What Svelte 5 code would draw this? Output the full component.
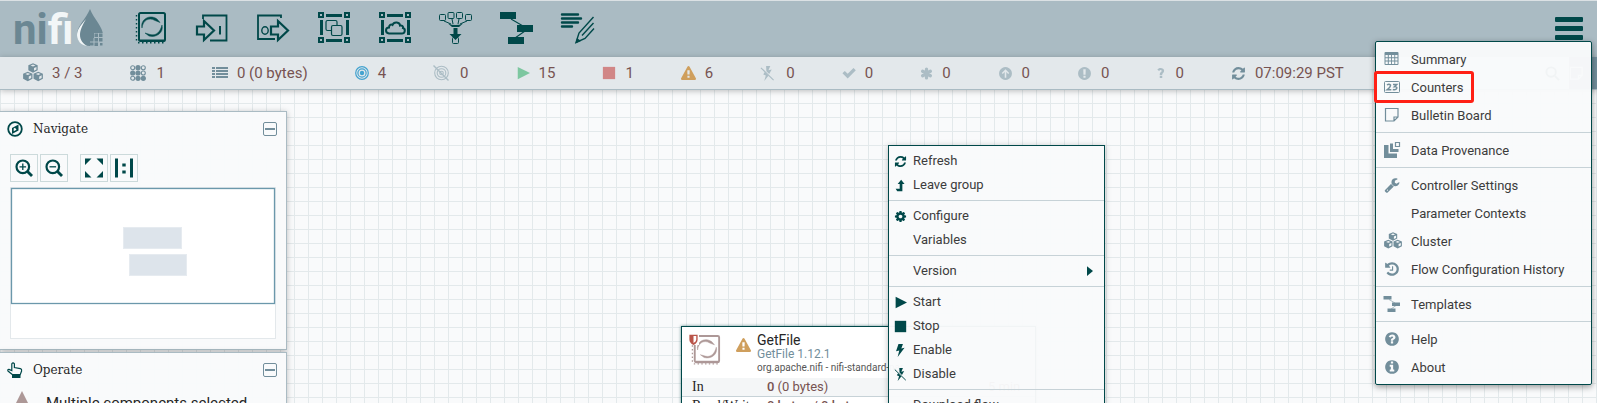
<script lang="ts">
	interface MenuItem {
		label: string;
		icon?: string;
		submenu?: boolean;
		marked?: boolean;
	}

	interface Icon {
		box: number;
		body: string;
	}

	const CIRCLE =
		'M1664 896q0 209-103 385.5t-279.5 279.5-385.5 103-385.5-103-279.5-279.5-103-385.5 103-385.5 279.5-279.5 385.5-103 385.5 103 279.5 279.5 103 385.5z';

	const CORNERS =
		'<path fill="none" stroke="currentColor" stroke-width="2" d="M1 1h4v4h-4zM27 1h4v4h-4zM1 26h4v4h-4zM27 26h4v4h-4z"/><path d="M8 2h16v3H8zM8 27h16v3H8zM2 8h3v15H2zM28 8h3v15h-3z"/>';

	const CUBE =
		'<path d="M9 .2 13.200 2v4.600L9 8.800 4.800 6.600V2zM6.800 2.300 9 3.200l2.200-.9L9 1.400zM9.900 4.500v2.500l2.200-1.100V3.500z"/>';

	const icons: Record<string, Icon> = {
		processor: {
			box: 32,
			body: '<rect x="4" y="1" width="26" height="28" rx="1.500" fill="none" stroke="currentColor" stroke-width="2"/><path d="M5 27.500h25v2H5z"/><path d="M1.500 3v28M3 30.800h28" fill="none" stroke="currentColor" stroke-width="1.400" stroke-dasharray="1.500 2.500"/><path d="M7 16C5 8 14 1.500 22 7l3 3.500-5-2C14 5 8 8 7 16zM27 13c2 8-6 13-13 11l-4-3 5 1.500c6 1.500 10-2 12-9.500z" stroke="currentColor" stroke-width=".5"/>'
		},
		input: {
			box: 32,
			body: '<path fill="none" stroke="currentColor" stroke-width="1.800" d="M7 7V3.500h23.500v25H14"/><path fill="none" stroke="currentColor" stroke-width="2.200" d="M1 14.500h7V9l10 9.500L8 28v-5.500H1z"/><path d="M23 14h2v8.500h-2z"/>'
		},
		output: {
			box: 32,
			body: '<path fill="none" stroke="currentColor" stroke-width="1.800" d="M24 6V3.500H1v23.500h17"/><path fill="none" stroke="currentColor" stroke-width="2.200" d="M14 14.500h7V9l10 9.500L21 28v-5.500h-7z"/><ellipse cx="8" cy="18.500" rx="3.200" ry="3.700" fill="none" stroke="currentColor" stroke-width="1.400"/>'
		},
		group: {
			box: 32,
			body:
				CORNERS +
				'<g fill="none" stroke="currentColor" stroke-width="1.200"><path d="M13 18.500h-3.500q-1.500 0-1.500-1.500v-7q0-1.500 1.500-1.500h8q1.500 0 1.500 1.500v3"/><rect x="13.500" y="13.500" width="10.500" height="10" rx="1.500"/></g>'
		},
		remote: {
			box: 32,
			body:
				CORNERS +
				'<path fill="none" stroke="currentColor" stroke-width="2" d="M10 21.500c-4-.5-4-6 0-6 0-2.500 2-3.500 3.500-2.500 1.500-4 7.500-3 7.500.5 2-.5 3.500 1 3 2.500 3 1 2 5.500-1 5.500z"/>'
		},
		funnel: {
			box: 32,
			body: '<g fill="none" stroke="currentColor" stroke-width="1"><rect x="-.5" y="2.500" width="6" height="6" rx="1"/><rect x="8" y=".5" width="6" height="6" rx="1"/><rect x="16.500" y=".5" width="6" height="6" rx="1"/><rect x="25.500" y="2.500" width="6" height="6" rx="1"/><rect x="12.500" y="25.500" width="6" height="6" rx="1"/><path d="M4 9l7 3M27 9l-7 3M12 7l1 5M19 7l-1 5"/></g><path d="M8 11.500q7.500 3 15 0L19 15h-7zM13.500 16h4v6h4l-6 6-6-6h4z"/>'
		},
		template: {
			box: 32,
			body: '<path d="M-1 0h16v7H-1zM16 13h16v7H16zM7 25h16v7H7z"/><path fill="none" stroke="currentColor" stroke-width="1.100" d="M10 7l12 7M24 19l-10 7"/>'
		},
		label: {
			box: 32,
			body: '<path fill="none" stroke="currentColor" stroke-width="2.400" stroke-linecap="round" d="M0 2.500h16M0 6.500h19M0 10.500h16M0 14.500h10"/><path fill="none" stroke="currentColor" stroke-width="1.400" d="M31.500 5 17 21l-3 9.500 9-4 9-10M31.500 11 20 23.500"/><path d="m15 26-1.500 5.500L19 29z"/>'
		},
		refresh: {
			box: 1792,
			body: '<path d="M1639 1056q0 5-1 7-64 268-268 434.500t-478 166.500q-146 0-282.500-55t-243.500-157l-129 129q-19 19-45 19t-45-19-19-45v-448q0-26 19-45t45-19h448q26 0 45 19t19 45-19 45l-137 137q71 66 161 102t187 36q134 0 250-65t186-179q11-17 53-117 8-23 30-23h192q13 0 22.500 9.500t9.500 22.500zm25-800v448q0 26-19 45t-45 19h-448q-26 0-45-19t-19-45 19-45l138-138q-148-137-349-137-134 0-250 65t-186 179q-11 17-53 117-8 23-30 23h-199q-13 0-22.500-9.500t-9.500-22.500v-7q65-268 270-434.500t480-166.500q146 0 284 55.500t245 156.500l130-129q19-19 45-19t45 19 19 45z"/>'
		},
		warning: {
			box: 1792,
			body: '<path d="M1024 1375v-190q0-14-9.500-23.500t-22.500-9.500h-192q-13 0-22.500 9.500t-9.500 23.500v190q0 14 9.500 23.500t22.500 9.500h192q13 0 22.500-9.500t9.500-23.500zm-2-374l18-459q0-12-10-19-13-11-24-11h-220q-11 0-24 11-10 7-10 21l17 457q0 10 10 16.500t24 6.500h185q14 0 23.500-6.500t10.500-16.500zm-14-934l768 1408q35 63-2 126-17 29-46.500 46t-63.500 17h-1536q-34 0-63.500-17t-46.500-46q-37-63-2-126l768-1408q17-31 47-49t65-18 65 18 47 49z"/>'
		},
		cog: {
			box: 1792,
			body: '<path d="M1152 896q0-106-75-181t-181-75-181 75-75 181 75 181 181 75 181-75 75-181zm512-109v222q0 12-8 23t-20 13l-185 28q-19 54-39 91 35 50 107 138 10 12 10 25t-9 23q-27 37-99 108t-94 71q-12 0-26-9l-138-108q-44 23-91 38-16 136-29 186-7 28-36 28h-222q-14 0-24.500-8.500t-11.500-21.500l-28-184q-49-16-90-37l-141 107q-10 9-25 9-14 0-25-11-126-114-165-168-7-10-7-23 0-12 8-23 15-21 51-66.500t54-70.500q-27-50-41-99l-183-27q-13-2-21-12.500t-8-23.500v-222q0-12 8-23t19-13l186-28q14-46 39-92-40-57-107-138-10-12-10-24 0-10 9-23 26-36 98.500-107.500t94.500-71.500q13 0 26 10l138 107q44-23 91-38 16-136 29-186 7-28 36-28h222q14 0 24.500 8.500t11.500 21.500l28 184q49 16 90 37l142-107q9-9 24-9 13 0 25 10 129 119 165 170 7 8 7 22 0 12-8 23-15 21-51 66.500t-54 70.500q26 50 41 98l183 28q13 2 21 12.500t8 23.500z"/>'
		},
		wrench: {
			box: 1792,
			body: '<path d="M448 1472q0-26-19-45t-45-19-45 19-19 45 19 45 45 19 45-19 19-45zm644-420l-682 682q-37 37-90 37-52 0-91-37l-106-108q-38-36-38-90 0-53 38-91l681-681q39 98 114.500 173.500t173.500 114.500zm634-435q0 39-23 106-47 134-164.500 217.500t-258.500 83.500q-185 0-316.500-131.500t-131.500-316.500 131.500-316.500 316.500-131.500q58 0 121.500 16.500t107.500 46.500q16 11 16 28t-16 28l-293 169v224l193 107q5-3 79-48.500t135.500-81 70.500-35.500q15 0 23.500 10t8.500 25z"/>'
		},
		history: {
			box: 1792,
			body: '<path d="M1664 896q0 156-61 298t-164 245-245 164-298 61q-172 0-327-72.500t-264-204.500q-7-10-6.500-22.500t8.500-20.500l137-138q10-9 25-9 16 2 23 12 73 95 179 147t225 52q104 0 198.500-40.500t163.500-109.500 109.500-163.500 40.500-198.500-40.500-198.500-109.500-163.500-163.500-109.500-198.500-40.500q-98 0-188 35.500t-160 101.500l137 138q31 30 14 69-17 40-59 40h-448q-26 0-45-19t-19-45v-448q0-42 40-59 39-17 69 14l130 129q107-101 244.500-156.500t284.500-55.500q156 0 298 61t245 164 164 245 61 298zm-640-288v448q0 14-9 23t-23 9h-320q-14 0-23-9t-9-23v-64q0-14 9-23t23-9h224v-352q0-14 9-23t23-9h64q14 0 23 9t9 23z"/>'
		},
		help: {
			box: 1792,
			body: `<path d="M1024 1376v-192q0-14-9-23t-23-9h-192q-14 0-23 9t-9 23v192q0 14 9 23t23 9h192q14 0 23-9t9-23zm256-672q0-88-55.500-163t-138.500-116-170-41q-243 0-371 213-15 24 8 42l132 100q7 6 19 6 16 0 25-12 53-68 86-92 34-24 86-24 48 0 85.500 26t37.500 59q0 38-20 61t-68 45q-63 28-115.500 86.500t-52.500 125.500v36q0 14 9 23t23 9h192q14 0 23-9t9-23q0-19 21.500-49.500t54.500-49.500q32-18 49-28.500t46-35 44.500-48 28-60.500 12.500-81z${CIRCLE}"/>`
		},
		about: {
			box: 1792,
			body: `<path d="M1152 1376v-160q0-14-9-23t-23-9h-96v-512q0-14-9-23t-23-9h-320q-14 0-23 9t-9 23v160q0 14 9 23t23 9h96v320h-96q-14 0-23 9t-9 23v160q0 14 9 23t23 9h448q14 0 23-9t9-23zm-128-896v-160q0-14-9-23t-23-9h-192q-14 0-23 9t-9 23v160q0 14 9 23t23 9h192q14 0 23-9t9-23z${CIRCLE}"/>`
		},
		syncFailure: {
			box: 1792,
			body: `<path d="M1024 1375v-190q0-14-9-23.500t-22-9.500h-192q-13 0-23 10t-10 23v190q0 13 10 23t23 10h192q13 0 22-9.500t9-23.500zm-2-344l18-621q0-12-10-18-10-8-24-8h-220q-14 0-24 8-10 6-10 18l17 621q0 10 10 17.500t24 7.500h185q14 0 23.500-7.500t10.500-17.500z${CIRCLE}"/>`
		},
		stale: {
			box: 1792,
			body: `<path d="M896 380 1340 824 1220 944 990 720V1400H802V720L572 944 452 824z${CIRCLE}"/>`
		},
		unknown: {
			box: 16,
			body: '<path d="M6 12.500h4V16H6zM6 11V9.500C6 7 9 6.800 9 4.800 9 2.700 6 2.800 5 4.800L2.200 2.700C4.500-1.500 13-.5 13 4.500c0 3.500-3.200 3.500-3.200 6.500z"/>'
		},
		check: { box: 16, body: '<path d="m.5 8.300 2.700-2.700 3.300 3.200 6.600-6.600 2.700 2.700-9.300 9.300z"/>' },
		asterisk: {
			box: 16,
			body: '<g stroke="currentColor" stroke-width="4" stroke-linecap="round"><path d="M8 2.500v11M3.200 5.200l9.600 5.600M12.800 5.200l-9.600 5.600"/></g>'
		},
		play: { box: 16, body: '<path d="M2 1 16 8 2 15z"/>' },
		stop: { box: 16, body: '<path d="M1 1h14v14H1z"/>' },
		caret: { box: 16, body: '<path d="M4 1.500 12 8l-8 6.500z"/>' },
		bolt: { box: 16, body: '<path d="M5.500 0h5.500L9 5.500l4-.8L4.500 16l2-8L2.500 9z"/>' },
		disabled: {
			box: 16,
			body: '<path d="M6.500 0h4.500L9 4.500l3.500-.7-2.700 4.700-3-3zM5 6.500l4 4-4.500 5.500L6.200 10 3.500 9z"/><path d="M1 2l13.500 13" fill="none" stroke="currentColor" stroke-width="1.200"/>'
		},
		leave: { box: 16, body: '<path d="M2 12h5V6H4.500L8.800 1 13 6h-2.700v9H4z"/>' },
		cubes: {
			box: 18,
			body: `${CUBE}<g transform="translate(-4.700 7.600)">${CUBE}</g><g transform="translate(4.700 7.600)">${CUBE}</g>`
		},
		threads: {
			box: 16,
			body: '<g fill="none" stroke="currentColor" stroke-width="1.100"><circle cx="2.700" cy="2.700" r="2"/><circle cx="13.300" cy="2.700" r="2"/><circle cx="13.300" cy="8" r="2"/><circle cx="2.700" cy="13.300" r="2"/></g><circle cx="8" cy="2.700" r="2.600"/><circle cx="2.700" cy="8" r="2.600"/><circle cx="8" cy="8" r="2.600"/><circle cx="8" cy="13.300" r="2.600"/><circle cx="13.300" cy="13.300" r="2.600"/>'
		},
		list: {
			box: 16,
			body: '<path d="M0 2h3v2H0zM4 2h12v2H4zM0 5h3v2H0zM4 5h12v2H4zM0 8h3v2H0zM4 8h12v2H4zM0 11h3v2H0zM4 11h12v2H4z"/>'
		},
		transmitting: {
			box: 16,
			body: '<g fill="none" stroke="currentColor" stroke-width="1.400"><circle cx="8" cy="8" r="7.200"/><circle cx="8" cy="8" r="4.700"/></g><circle cx="8" cy="8" r="2.500"/>'
		},
		notTransmitting: {
			box: 16,
			body: '<g fill="none" stroke="currentColor" stroke-width="1.100"><circle cx="8.500" cy="8" r="6.800"/><circle cx="8.500" cy="8" r="4.300"/><circle cx="8.500" cy="8" r="1.800"/><path d="M.5.5l15 15" stroke-width="1.400"/></g>'
		},
		table: {
			box: 16,
			body: '<path d="M1.500 1h12q1 0 1 1v11q0 1-1 1h-12q-1 0-1-1V2q0-1 1-1zM1.500 4v2.300h2.300V4zM4.800 4v2.300h2.300V4zM8 4v2.300h2.300V4zM11.200 4v2.300h2.300V4zM1.500 7.300v2.300h2.300V7.300zM4.800 7.300v2.300h2.300V7.300zM8 7.300v2.300h2.300V7.300zM11.200 7.300v2.300h2.300V7.300zM1.500 10.600v2.300h2.300v-2.300zM4.800 10.600v2.300h2.300v-2.300zM8 10.600v2.300h2.300v-2.300zM11.200 10.600v2.300h2.300v-2.300z"/>'
		},
		counter: {
			box: 16,
			body: '<rect x=".5" y="2.500" width="15" height="11" rx="1" fill="none" stroke="currentColor"/><path fill="none" stroke="currentColor" stroke-width="1.500" d="M3 6q2-1.600 3.500 0 .4 1.600-3.400 4.800H7.300M9 5.500h3.700L10.500 7.700q2.700-.2 2.300 1.600-1 2.200-4 1.200"/>'
		},
		bulletin: {
			box: 16,
			body: '<path fill="none" stroke="currentColor" stroke-width="1.200" d="M1.500 1.500h12.500v8.500l-4 4H1.500zM14 10h-4v4"/>'
		},
		provenance: {
			box: 16,
			body: '<path d="M0 3h4.500v8.500H13V16H0zM6 1.500h3V7h5.500v3H6z"/><path d="M11.500.5h4v4h-4z" fill="none" stroke="currentColor" stroke-width="1.200"/>'
		},
		compass: {
			box: 16,
			body: '<circle cx="8" cy="8" r="6.800" fill="none" stroke="currentColor" stroke-width="1.800"/><path d="M11.500 3.500v6l-6.500 3.500V7zM8 6.700 6.700 7.500v2.800L9.500 8.700z"/>'
		},
		hand: {
			box: 16,
			body: '<path fill="none" stroke="currentColor" stroke-width="1.200" d="M5.300 12.500 1 9q-.8-1.700 1-1.600l2.800 1.200V1.800q1.200-2 2.600 0V5.500l6 1.200q1.600.4 1.200 2.300l-1.400 3.600z"/><path d="M5 13h8.500v3H5z"/>'
		},
		zoomIn: {
			box: 18,
			body: '<g fill="none" stroke="currentColor"><circle cx="7.800" cy="7.800" r="6.300" stroke-width="2.200"/><path stroke-width="2.800" d="m12.500 12.500 4.500 4.500"/><path stroke-width="1.300" d="M4.500 7.800h6.600M7.800 4.500v6.600"/></g>'
		},
		zoomOut: {
			box: 18,
			body: '<g fill="none" stroke="currentColor"><circle cx="7.800" cy="7.800" r="6.300" stroke-width="2.200"/><path stroke-width="2.800" d="m12.500 12.500 4.500 4.500"/><path stroke-width="1.300" d="M4.500 7.800h6.600"/></g>'
		},
		fit: {
			box: 18,
			body: '<path d="M0-.5h6.500L0 6zM18-.5v6.500L11.500-.5zM0 18.500V12l6.500 6.500zM18 18.500h-6.500L18 12z"/>'
		},
		actual: { box: 18, body: '<path d="M0-.5h3v19H0zM15-.5h3v19h-3zM7.300 4.500h3.400v3H7.300zM7.300 11.500h3.400v3H7.300z"/>' },
		search: {
			box: 16,
			body: '<g fill="none" stroke="currentColor" stroke-width="2"><circle cx="6.500" cy="6.500" r="5"/><path d="m10.500 10.500 4.500 4.500"/></g>'
		},
		shield: { box: 16, body: '<path d="M2 1h12v7q0 5-6 8-6-3-6-8zM8 3v10q4-2 4-5V3z"/>' },
		selection: { box: 32, body: '<path d="M16 0 32 32H0z"/>' }
	};

	const tools = [
		['processor', 'Processor'],
		['input', 'Input Port'],
		['output', 'Output Port'],
		['group', 'Process Group'],
		['remote', 'Remote Process Group'],
		['funnel', 'Funnel'],
		['template', 'Template'],
		['label', 'Label']
	];

	const statuses = [
		{ icon: 'cubes', value: '3 / 3', size: 20, tone: 'slate' },
		{ icon: 'threads', value: '1', size: 16, tone: 'slate', wide: true },
		{ icon: 'list', value: '0 (0 bytes)', size: 16, tone: 'slate' },
		{ icon: 'transmitting', value: '4', size: 14, tone: 'blue' },
		{ icon: 'notTransmitting', value: '0', size: 16, tone: 'pale', wide: true },
		{ icon: 'play', value: '15', size: 14, tone: 'green' },
		{ icon: 'stop', value: '1', size: 14, tone: 'red' },
		{ icon: 'warning', value: '6', size: 15, tone: 'amber' },
		{ icon: 'disabled', value: '0', size: 15, tone: 'pale', wide: true },
		{ icon: 'check', value: '0', size: 14, tone: 'pale' },
		{ icon: 'asterisk', value: '0', size: 13, tone: 'pale' },
		{ icon: 'stale', value: '0', size: 15, tone: 'pale' },
		{ icon: 'syncFailure', value: '0', size: 15, tone: 'pale' },
		{ icon: 'unknown', value: '0', size: 10, tone: 'pale' },
		{ icon: 'refresh', value: '07:09:29 PST', size: 15, tone: 'slate' }
	];

	const globalMenu: MenuItem[][] = [
		[
			{ label: 'Summary', icon: 'table' },
			{ label: 'Counters', icon: 'counter', marked: true },
			{ label: 'Bulletin Board', icon: 'bulletin' }
		],
		[{ label: 'Data Provenance', icon: 'provenance' }],
		[
			{ label: 'Controller Settings', icon: 'wrench' },
			{ label: 'Parameter Contexts' },
			{ label: 'Cluster', icon: 'cubes' },
			{ label: 'Flow Configuration History', icon: 'history' }
		],
		[{ label: 'Templates', icon: 'template' }],
		[
			{ label: 'Help', icon: 'help' },
			{ label: 'About', icon: 'about' }
		]
	];

	const contextMenu: MenuItem[][] = [
		[
			{ label: 'Refresh', icon: 'refresh' },
			{ label: 'Leave group', icon: 'leave' }
		],
		[{ label: 'Configure', icon: 'cog' }, { label: 'Variables' }],
		[{ label: 'Version', submenu: true }],
		[
			{ label: 'Start', icon: 'play' },
			{ label: 'Stop', icon: 'stop' },
			{ label: 'Enable', icon: 'bolt' },
			{ label: 'Disable', icon: 'disabled' }
		],
		[{ label: 'Download flow' }]
	];

	let navigateOpen = $state(true);
	let operateOpen = $state(true);
	let menuOpen = $state(true);
</script>

{#snippet icon(name: string, size: number)}
	<svg
		class="icon"
		width={size}
		height={size}
		viewBox="0 0 {icons[name].box} {icons[name].box}"
		fill="currentColor"
		fill-rule="evenodd"
		aria-hidden="true">{@html icons[name].body}</svg
	>
{/snippet}

{#snippet menu(groups: MenuItem[][], iconSize: number)}
	{#each groups as group}
		<div class="menu-group">
			{#each group as item}
				<button class="menu-item" class:marked={item.marked}>
					<span class="menu-icon">
						{#if item.icon}{@render icon(item.icon, item.icon === 'cubes' ? 18 : iconSize)}{/if}
					</span>
					<span class="menu-label">{item.label}</span>
					{#if item.submenu}{@render icon('caret', 12)}{/if}
				</button>
			{/each}
		</div>
	{/each}
{/snippet}

<div class="app">
	<header class="toolbar">
		<div class="logo">
			<span class="logo-text">ni<span class="logo-light">fi</span></span>
			<svg class="drop" width="28" height="38" viewBox="0 0 28 38" aria-hidden="true">
				<path d="M14 0C10 10 1 17 1 25.500 1 33 7 37 14 37c3 0 5-.5 7-2l6-9C27 18 18 10 14 0z" fill="#6b8793" />
				<path d="M10 10C4 17 1 21 1 26c0 6 4 10 10 11-4-2.500-7-6-7-11 0-5 3-11 6-16z" fill="#f2f6f7" />
				<path d="M18 24h9v12h-9zM14 29h5v8h-5z" fill="#aabbc3" />
				<path
					d="M18.500 24.500h3.500v3.500h-3.500zM23 24.500h3.500v3.500H23zM18.500 29h3.500v3.500h-3.500zM23 29h3.500v3.500H23zM14 29h3.500v3.500H14zM18.500 33.500h3.500v3.500h-3.500zM14 33.500h3.500v3H14zM24 34h2.500v2.500H24z"
					fill="#6b8793"
				/>
			</svg>
		</div>
		<div class="tools">
			{#each tools as [name, label]}
				<button class="tool" aria-label={label}>{@render icon(name, 32)}</button>
			{/each}
		</div>
		<button class="hamburger" aria-label="Global menu" onclick={() => (menuOpen = !menuOpen)}>
			<span></span><span></span><span></span>
		</button>
	</header>

	<div class="status-bar">
		{#each statuses as status}
			<div class="status" class:wide={status.wide}>
				<span class={status.tone}>{@render icon(status.icon, status.size)}</span>
				<span>{status.value}</span>
			</div>
		{/each}
		<div class="status-actions">
			<button class="search" aria-label="Search">{@render icon('search', 15)}</button>
			<button class="bulletins" aria-label="Bulletins">{@render icon('bulletin', 15)}</button>
		</div>
	</div>

	<main class="canvas">
		<div class="panels">
			<section class="panel">
				<div class="panel-head">
					{@render icon('compass', 16)}
					<h2>Navigate</h2>
					<button class="collapse" aria-label="Collapse Navigate" onclick={() => (navigateOpen = !navigateOpen)}></button>
				</div>
				{#if navigateOpen}
					<div class="zoom-tools">
						<button aria-label="Zoom in">{@render icon('zoomIn', 18)}</button>
						<button aria-label="Zoom out">{@render icon('zoomOut', 18)}</button>
						<button class="spaced" aria-label="Fit">{@render icon('fit', 18)}</button>
						<button aria-label="Actual size">{@render icon('actual', 18)}</button>
					</div>
					<svg class="birdseye" viewBox="0 0 266 152" aria-hidden="true">
						<rect x=".5" y=".5" width="265" height="151" fill="#fff" stroke="#e3e8eb" />
						<rect x="113.500" y="40.500" width="58" height="21" fill="#dde4eb" stroke="#e6ebf0" />
						<rect x="119.500" y="67.500" width="57" height="21" fill="#dde4eb" stroke="#e6ebf0" />
						<rect x="1.500" y="1.500" width="263" height="115" fill="none" stroke="#6b98ab" stroke-width="1.300" />
					</svg>
				{/if}
			</section>

			<section class="panel">
				<div class="panel-head">
					{@render icon('hand', 16)}
					<h2>Operate</h2>
					<button class="collapse" aria-label="Collapse Operate" onclick={() => (operateOpen = !operateOpen)}></button>
				</div>
				{#if operateOpen}
					<div class="selection">
						<span class="selection-icon">{@render icon('selection', 24)}</span>
						<span>Multiple components selected</span>
					</div>
				{/if}
			</section>
		</div>

		<article class="node">
			<div class="node-head">
				<div class="node-icon">
					{@render icon('processor', 30)}
					<span class="restricted">{@render icon('shield', 11)}</span>
				</div>
				<span class="node-warning">{@render icon('warning', 15)}</span>
				<div class="node-names">
					<div class="node-name">GetFile</div>
					<div class="node-type">GetFile 1.12.1</div>
					<div class="node-bundle">org.apache.nifi - nifi-standard-nar</div>
				</div>
			</div>
			<table>
				<tbody>
					<tr>
						<th scope="row">In</th>
						<td><b>0</b> (0 bytes)</td>
						<td class="window">5 min</td>
					</tr>
					<tr>
						<th scope="row">Read/Write</th>
						<td><b>0 bytes</b> / <b>0 bytes</b></td>
						<td></td>
					</tr>
				</tbody>
			</table>
		</article>

		<nav class="menu context-menu" aria-label="Canvas">{@render menu(contextMenu, 13)}</nav>
	</main>

	{#if menuOpen}
		<nav class="menu global-menu" aria-label="Global">{@render menu(globalMenu, 16)}</nav>
	{/if}
</div>

<style>
	:global(body) {
		margin: 0;
	}
	.app {
		position: relative;
		display: flex;
		flex-direction: column;
		height: 100vh;
		overflow: hidden;
		font-family: Roboto, sans-serif;
		font-size: 13px;
		color: #262626;
	}
	button {
		margin: 0;
		padding: 0;
		border: 0;
		background: none;
		font: inherit;
		color: inherit;
		cursor: pointer;
	}
	.icon {
		display: block;
		flex: none;
		overflow: visible;
	}

	.toolbar {
		display: flex;
		height: 56px;
		flex: none;
		border-top: 1px solid #dbe1e4;
		background: #aabbc3;
		color: #004849;
	}
	.logo {
		display: flex;
		width: 121px;
		box-sizing: border-box;
		padding: 8px 0 0 13px;
	}
	.logo-text {
		width: 63px;
		font-size: 42px;
		font-weight: 700;
		line-height: 42px;
		color: #6b8793;
	}
	.logo-light {
		color: #f2f6f7;
	}
	.tools {
		display: flex;
	}
	.tool {
		padding: 0 15px 2px 14px;
	}
	.hamburger {
		display: flex;
		flex-direction: column;
		gap: 4px;
		margin: 16px 14px 0 auto;
		align-self: flex-start;
	}
	.hamburger span {
		width: 28px;
		height: 5px;
		border-radius: 1px;
		background: #004849;
	}

	.status-bar {
		position: relative;
		z-index: 1;
		display: flex;
		flex: none;
		gap: 47px;
		height: 32px;
		padding-left: 23px;
		border-bottom: 1px solid #aabbc3;
		background: #e3e8eb;
		box-shadow: 0 1px 6px rgba(0, 0, 0, 0.25);
		font-size: 15px;
		color: #775351;
	}
	.status {
		display: flex;
		align-items: center;
		gap: 9px;
		white-space: nowrap;
	}
	.status.wide {
		gap: 11px;
	}
	.slate {
		color: #728e9b;
	}
	.blue {
		color: #44a3cf;
	}
	.green {
		color: #7dc7a0;
	}
	.red {
		color: #d18686;
	}
	.amber {
		color: #cf9f5d;
	}
	.pale {
		color: #acbdc5;
	}
	.status-actions {
		display: flex;
		margin-left: auto;
		color: #004849;
	}
	.search {
		padding: 0 9px;
	}
	.bulletins {
		width: 28px;
		background: #728e9b;
		color: #fff;
	}

	.canvas {
		position: relative;
		flex: 1;
		min-height: 0;
		background-color: #f9fafb;
		background-image:
			linear-gradient(to right, #e3e9eb 1px, transparent 1px),
			linear-gradient(to bottom, #e3e9eb 1px, transparent 1px);
		background-size: 14px 14px;
		background-position: 0 -1px;
	}
	.panels {
		display: flex;
		flex-direction: column;
		gap: 2px;
		width: 287px;
		padding-top: 21px;
	}
	.panel {
		padding: 0 10px 10px;
		border: 1px solid #aabbc3;
		border-left: 0;
		background: rgba(249, 250, 251, 0.97);
		box-shadow: 0 1px 6px rgba(0, 0, 0, 0.25);
	}
	.panel-head {
		display: flex;
		align-items: center;
		height: 33px;
		margin-left: -3px;
		color: #004849;
	}
	h2 {
		flex: 1;
		margin: 0 0 0 10px;
		font-family: 'Roboto Slab', 'DejaVu Serif', serif;
		font-size: 12px;
		font-weight: 400;
		color: #262626;
	}
	.collapse {
		width: 14px;
		height: 14px;
		border: 1px solid #728e9b;
		border-radius: 2px;
		margin-right: -1px;
		background: linear-gradient(#728e9b, #728e9b) center / 10px 2px no-repeat;
	}
	.zoom-tools {
		display: flex;
		gap: 2px;
		padding: 9px 0 5px;
	}
	.zoom-tools button {
		display: grid;
		place-items: center;
		width: 28px;
		height: 28px;
		box-sizing: border-box;
		border: 1px solid #ccdadb;
		color: #004849;
	}
	.zoom-tools .spaced {
		margin-left: 10px;
	}
	.birdseye {
		display: block;
		width: 100%;
	}
	.selection {
		display: flex;
		gap: 12px;
		padding-top: 5px;
		font-size: 15px;
		line-height: 24px;
	}
	.selection-icon {
		color: #ad9897;
	}

	.node {
		position: absolute;
		top: 236px;
		left: 681px;
		width: 353px;
		border: 1px solid #004849;
		background: #fff;
		box-shadow: 0 0 3px rgba(0, 72, 73, 0.6);
	}
	.node-head {
		display: flex;
		height: 51px;
	}
	.node-icon {
		position: relative;
		padding: 8px 0 0 9px;
		color: #ad9897;
	}
	.restricted {
		position: absolute;
		top: 7px;
		left: 6px;
		background: #fff;
		color: #ba554a;
	}
	.node-warning {
		padding: 11px 6px 0 15px;
		color: #cf9f5d;
	}
	.node-names {
		padding-top: 6px;
		font-size: 12px;
		line-height: 14px;
		white-space: nowrap;
	}
	.node-name {
		font-size: 14px;
	}
	.node-type {
		color: #728e9b;
	}
	.node-bundle {
		font-size: 10px;
		color: #555;
	}
	table {
		width: 100%;
		border-collapse: collapse;
		color: #775351;
	}
	tr {
		height: 18px;
		border-bottom: 1px solid #c7d2d7;
	}
	tr:first-child {
		background: #f4f6f7;
	}
	th,
	td {
		padding: 0;
		line-height: 18px;
		text-align: left;
	}
	th {
		width: 75px;
		padding-left: 10px;
		font-family: 'Roboto Slab', 'Liberation Serif', serif;
		font-size: 14px;
		font-weight: 400;
		color: #262626;
	}
	b {
		font-weight: 500;
	}
	.window {
		width: 47px;
	}

	.menu {
		position: absolute;
		box-sizing: border-box;
		border: 1px solid #004849;
		background: rgba(249, 250, 251, 0.97);
	}
	.menu-group {
		padding: 3px 0;
	}
	.menu-group + .menu-group {
		border-top: 1px solid #c7d2d7;
	}
	.menu-item {
		position: relative;
		display: flex;
		align-items: center;
		width: 100%;
		text-align: left;
	}
	.menu-label {
		flex: 1;
		color: #3c3c3c;
	}
	.context-menu {
		top: 55px;
		left: 888px;
		width: 217px;
		box-shadow: 0 1px 6px rgba(0, 0, 0, 0.25);
		color: #004849;
	}
	.context-menu .menu-item {
		height: 24px;
		padding: 0 8px 0 5px;
	}
	.context-menu .menu-icon {
		width: 19px;
	}
	.context-menu .menu-label {
		padding-bottom: 2px;
	}
	.global-menu {
		z-index: 2;
		top: 41px;
		right: 5px;
		width: 217px;
		border-radius: 2px;
		box-shadow: 0 2px 6px rgba(0, 0, 0, 0.4);
		color: #728e9b;
	}
	.global-menu .menu-item {
		height: 28px;
		padding-left: 8px;
	}
	.global-menu .menu-icon {
		width: 27px;
	}
	.marked::after {
		content: '';
		position: absolute;
		top: -2px;
		left: -2px;
		width: 94px;
		height: 26px;
		border: 3px solid #ff2015;
		border-radius: 3px;
	}
</style>
